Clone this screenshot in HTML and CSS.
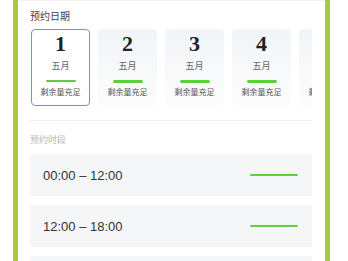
FILE: index.html
```html
<!DOCTYPE html>
<html lang="zh">
<head>
<meta charset="utf-8">
<link rel="stylesheet" href="styles.css">
</head>
<body>
<div class="frame">
  <div class="content">
    <div class="section-title">预约日期</div>
    <div class="dates">
      <div class="date-card selected">
        <div class="day">1</div>
        <div class="month">五月</div>
        <div class="bar"></div>
        <div class="status">剩余量充足</div>
      </div>
      <div class="date-card">
        <div class="day">2</div>
        <div class="month">五月</div>
        <div class="bar"></div>
        <div class="status">剩余量充足</div>
      </div>
      <div class="date-card">
        <div class="day">3</div>
        <div class="month">五月</div>
        <div class="bar"></div>
        <div class="status">剩余量充足</div>
      </div>
      <div class="date-card">
        <div class="day">4</div>
        <div class="month">五月</div>
        <div class="bar"></div>
        <div class="status">剩余量充足</div>
      </div>
      <div class="date-card">
        <div class="day">5</div>
        <div class="month">五月</div>
        <div class="bar"></div>
        <div class="status">剩余量充足</div>
      </div>
    </div>
    <div class="divider"></div>
    <div class="section-title light">预约时段</div>
    <div class="slots">
      <div class="slot"><span class="slot-time">00:00 – 12:00</span><span class="slot-bar"></span></div>
      <div class="slot"><span class="slot-time">12:00 – 18:00</span><span class="slot-bar"></span></div>
      <div class="slot"><span class="slot-time">18:00 – 24:00</span><span class="slot-bar"></span></div>
    </div>
  </div>
</div>
</body>
</html>
```

FILE: styles.css
```css
html, body {
  margin: 0;
  padding: 0;
  background: #ffffff;
  overflow: hidden;
}

body {
  width: 348px;
  height: 261px;
  font-family: "Liberation Sans", "Noto Sans CJK SC", sans-serif;
}

.frame {
  margin-left: 13px;
  width: 307px;
  height: 261px;
  border-left: 5px solid #a7c93a;
  border-right: 5px solid #a7c93a;
  overflow: hidden;
}

.content {
  border-top: 1px solid #f1f2f4;
  padding: 8px 13px 0 12px;
}

.section-title {
  font-size: 10px;
  line-height: 14px;
  color: #444;
  font-family: "Noto Sans CJK SC", sans-serif;
}

.section-title.light {
  font-size: 9px;
  line-height: 12px;
  color: #b8b8b8;
  margin-top: 13px;
}

.dates {
  display: flex;
  gap: 8px;
  margin-top: 6px;
  padding-left: 1px;
  overflow: hidden;
}

.date-card {
  flex: 0 0 59px;
  height: 77px;
  box-sizing: border-box;
  border-radius: 4px;
  background: linear-gradient(#f2f5f8, #fbfcfd);
  display: flex;
  flex-direction: column;
  align-items: center;
  padding-top: 4px;
}

.date-card.selected {
  background: #ffffff;
  border: 1.5px solid #5b9de3;
  padding-top: 2.5px;
}

.day {
  font-family: "Liberation Serif", serif;
  font-weight: bold;
  font-size: 22px;
  line-height: 22px;
  color: #222;
}

.month {
  margin-top: 5px;
  font-family: "Noto Sans CJK SC", sans-serif;
  font-size: 9px;
  line-height: 12px;
  color: #666;
}

.bar {
  margin-top: 8px;
  width: 30px;
  height: 2.5px;
  border-radius: 2px;
  background: #5ccf3a;
}

.status {
  margin-top: 3.5px;
  font-family: "Noto Sans CJK SC", sans-serif;
  font-size: 8px;
  line-height: 11px;
  color: #555;
}

.divider {
  margin-top: 14px;
  height: 1px;
  background: #eeeff1;
}

.slots {
  margin-top: 8px;
  display: flex;
  flex-direction: column;
  gap: 9px;
}

.slot {
  height: 42px;
  background: #f5f6f8;
  border-radius: 2px;
  display: flex;
  align-items: center;
  justify-content: space-between;
  padding: 0 14px 0 13px;
}

.slot-time {
  font-size: 13px;
  color: #333;
}

.slot-bar {
  width: 48px;
  height: 2px;
  border-radius: 1px;
  background: #62cf3c;
}
```
